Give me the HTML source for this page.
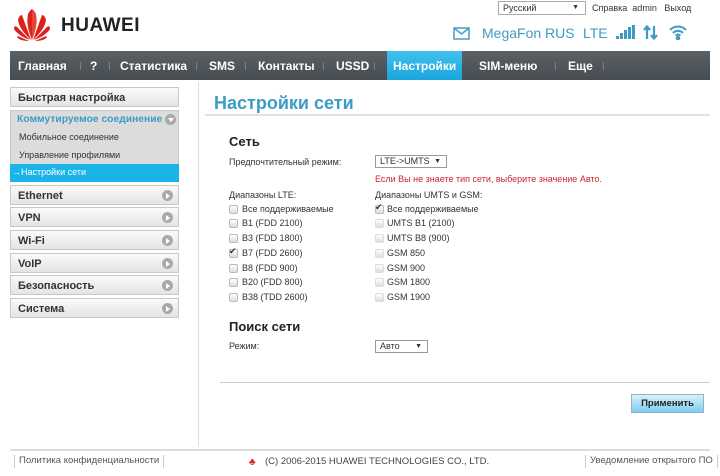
<!DOCTYPE html>
<html><head><meta charset="utf-8"><style>
*{margin:0;padding:0;box-sizing:border-box}
body{width:720px;height:476px;background:#fff;font-family:"Liberation Sans",Arial,sans-serif;position:relative;overflow:hidden;color:#333}
.a{position:absolute;white-space:nowrap}
.nav{position:absolute;left:10px;top:51px;width:700px;height:29px;background:linear-gradient(#5a6166,#464c50);}
.nav span{position:absolute;top:8px;color:#fff;font-weight:bold;font-size:12px}
.nav i{position:absolute;top:11px;width:1px;height:8px;background:#7a8085}
.act{position:absolute;left:377px;top:0;width:75px;height:29px;background:linear-gradient(#3fc2ee,#1aa5dc)}
.sb{position:absolute;left:10px;width:169px;height:20px;border:1px solid #c8c8c8;background:linear-gradient(#fafafa,#e4e4e4);font-weight:bold;font-size:11px;padding:4px 0 0 7px;color:#333}
.sb b{position:absolute;right:5px;top:4px;width:11px;height:11px;border-radius:50%;background:#a9a9a9}
.sb b:after{content:"";position:absolute;left:4px;top:2.5px;border-left:4px solid #fff;border-top:3px solid transparent;border-bottom:3px solid transparent}
.f{font-size:9px;color:#333}
.cb{position:absolute;width:9px;height:9px;border:1px solid #bbb;background:linear-gradient(#fff,#ddd);border-radius:2px}
.sel{position:absolute;height:13px;border:1px solid #999;background:#fff;font-size:9px;padding:0 0 0 4px;line-height:11px}
.sel:after{content:"▼";position:absolute;right:5px;top:0;font-size:7px}
</style></head><body>
<svg class="a" style="left:12px;top:6px" width="40" height="36" viewBox="0 0 40 36">
<g fill="#d9231d">
<path d="M20 34 C17 26 14 18 16 8 C18 4 20 3 20 3 Z"/>
<path d="M20 34 C23 26 26 18 24 8 C22 4 20 3 20 3 Z" fill="#e8453a"/>
<path d="M19 34 C13 28 7 22 6 14 C7 10 9 9 10 9 Z"/>
<path d="M21 34 C27 28 33 22 34 14 C33 10 31 9 30 9 Z"/>
<path d="M18 34 C12 32 5 28 2 23 C2 21 3 20 4 20 Z"/>
<path d="M22 34 C28 32 35 28 38 23 C38 21 37 20 36 20 Z"/>
<path d="M17 35 C12 35 7 34 5 31 L6 30 Z"/>
<path d="M23 35 C28 35 33 34 35 31 L34 30 Z"/>
</g></svg>
<div class="a" style="left:61px;top:15px;font-size:19px;font-weight:bold;color:#222;letter-spacing:0.5px">HUAWEI</div>
<div class="a" style="left:498px;top:1px;width:88px;height:14px;border:1px solid #aaa;font-size:9px;padding-left:4px;line-height:12px">Русский<span style="position:absolute;right:6px;font-size:7px">▼</span></div>
<div class="a f" style="left:592px;top:3px">Справка&nbsp; admin&nbsp;&nbsp; Выход</div>
<svg class="a" style="left:453px;top:27px" width="17" height="13"><rect x="1" y="1" width="15" height="11" fill="none" stroke="#4a9cc2" stroke-width="1.5"/><path d="M1 1 L8.5 7 L16 1" fill="none" stroke="#4a9cc2" stroke-width="1.5"/></svg>
<div class="a" style="left:482px;top:25px;font-size:14px;color:#3f9bc4">MegaFon RUS</div>
<div class="a" style="left:583px;top:25px;font-size:14px;color:#3f9bc4">LTE</div>
<svg class="a" style="left:616px;top:25px" width="20" height="15" fill="#3f9bc4"><rect x="0" y="11" width="3" height="3"/><rect x="4" y="8" width="3" height="6"/><rect x="8" y="5" width="3" height="9"/><rect x="12" y="2" width="3" height="12"/><rect x="16" y="0" width="3" height="14"/></svg>
<svg class="a" style="left:643px;top:25px" width="16" height="15" stroke="#3f9bc4" stroke-width="2.2" fill="none"><path d="M4 14V2M1 5L4 1.5L7 5M11 1V13M8 10L11 13.5L14 10"/></svg>
<svg class="a" style="left:669px;top:24px" width="18" height="16" fill="none" stroke="#3f9bc4" stroke-width="2"><path d="M1 6A11 11 0 0 1 17 6M4 9A7 7 0 0 1 14 9M6.5 11.5A3.5 3.5 0 0 1 11.5 11.5"/><circle cx="9" cy="14" r="1.3" fill="#3f9bc4"/></svg>
<div class="nav">
<div class="act"></div>
<span style="left:8px">Главная</span><i style="left:70px"></i>
<span style="left:80px">?</span><i style="left:99px"></i>
<span style="left:110px">Статистика</span><i style="left:186px"></i>
<span style="left:199px">SMS</span><i style="left:235px"></i>
<span style="left:248px">Контакты</span><i style="left:313px"></i>
<span style="left:326px">USSD</span><i style="left:364px"></i>
<span style="left:383px">Настройки</span>
<span style="left:469px">SIM-меню</span><i style="left:545px"></i>
<span style="left:558px">Еще</span><i style="left:593px"></i>
</div>
<div class="sb" style="top:87px">Быстрая настройка</div>
<div style="position:absolute;left:10px;top:110px;width:169px;height:72px;background:#dcdcdc;border:1px solid #c8c8c8"></div>
<div class="a" style="left:17px;top:114px;font-size:10.3px;font-weight:bold;color:#3d9cc6">Коммутируемое соединение</div>
<div class="a" style="left:165px;top:114px;width:11px;height:11px;border-radius:50%;background:#a9a9a9"><div style="position:absolute;left:2.5px;top:4px;border-top:4px solid #fff;border-left:3px solid transparent;border-right:3px solid transparent"></div></div>
<div class="a f" style="left:19px;top:132px">Мобильное соединение</div>
<div class="a f" style="left:19px;top:150px">Управление профилями</div>
<div style="position:absolute;left:10px;top:164px;width:169px;height:18px;background:#1bb4e8"></div>
<div class="a" style="left:12px;top:167px;font-size:9px;color:#fff">→Настройки сети</div>
<div class="sb" style="top:185px">Ethernet<b></b></div>
<div class="sb" style="top:207px">VPN<b></b></div>
<div class="sb" style="top:230px">Wi-Fi<b></b></div>
<div class="sb" style="top:253px">VoIP<b></b></div>
<div class="sb" style="top:275px">Безопасность<b></b></div>
<div class="sb" style="top:298px">Система<b></b></div>
<div style="position:absolute;left:198px;top:82px;width:1px;height:365px;background:#ddd"></div>
<div class="a" style="left:214px;top:93px;font-size:18px;font-weight:bold;color:#3d9cc6">Настройки сети</div>
<div style="position:absolute;left:205px;top:114px;width:505px;height:2px;background:#e2e2e2"></div>
<div class="a" style="left:229px;top:134px;font-size:13px;font-weight:bold;color:#222">Сеть</div>
<div class="a f" style="left:229px;top:157px">Предпочтительный режим:</div>
<div class="sel" style="left:375px;top:155px;width:72px">LTE-&gt;UMTS</div>
<div class="a" style="left:375px;top:174px;font-size:9px;color:#c8262c">Если Вы не знаете тип сети, выберите значение Авто.</div>
<div class="a f" style="left:229px;top:190px">Диапазоны LTE:</div>
<div class="a f" style="left:375px;top:190px">Диапазоны UMTS и GSM:</div>
<div class="cb" style="left:229px;top:205px"></div><div class="a f" style="left:242px;top:204px">Все поддерживаемые</div>
<div class="cb" style="left:229px;top:219px"></div><div class="a f" style="left:242px;top:218px">B1 (FDD 2100)</div>
<div class="cb" style="left:229px;top:234px"></div><div class="a f" style="left:242px;top:233px">B3 (FDD 1800)</div>
<div class="cb" style="left:229px;top:249px"></div><div class="a" style="left:229px;top:246px;font-size:9px">✔</div><div class="a f" style="left:242px;top:248px">B7 (FDD 2600)</div>
<div class="cb" style="left:229px;top:264px"></div><div class="a f" style="left:242px;top:263px">B8 (FDD 900)</div>
<div class="cb" style="left:229px;top:278px"></div><div class="a f" style="left:242px;top:277px">B20 (FDD 800)</div>
<div class="cb" style="left:229px;top:293px"></div><div class="a f" style="left:242px;top:292px">B38 (TDD 2600)</div>
<div class="cb" style="left:375px;top:205px"></div><div class="a" style="left:375px;top:202px;font-size:9px">✔</div><div class="a f" style="left:387px;top:204px">Все поддерживаемые</div>
<div class="cb" style="left:375px;top:219px;border-color:#ddd"></div><div class="a f" style="left:387px;top:218px">UMTS B1 (2100)</div>
<div class="cb" style="left:375px;top:234px;border-color:#ddd"></div><div class="a f" style="left:387px;top:233px">UMTS B8 (900)</div>
<div class="cb" style="left:375px;top:249px;border-color:#ddd"></div><div class="a f" style="left:387px;top:248px">GSM 850</div>
<div class="cb" style="left:375px;top:264px;border-color:#ddd"></div><div class="a f" style="left:387px;top:263px">GSM 900</div>
<div class="cb" style="left:375px;top:278px;border-color:#ddd"></div><div class="a f" style="left:387px;top:277px">GSM 1800</div>
<div class="cb" style="left:375px;top:293px;border-color:#ddd"></div><div class="a f" style="left:387px;top:292px">GSM 1900</div>
<div class="a" style="left:229px;top:319px;font-size:13px;font-weight:bold;color:#222">Поиск сети</div>
<div class="a f" style="left:229px;top:341px">Режим:</div>
<div class="sel" style="left:375px;top:340px;width:53px">Авто</div>
<div style="position:absolute;left:220px;top:382px;width:490px;height:1px;background:#ccc"></div>
<div class="a" style="left:631px;top:394px;width:73px;height:19px;border:1px solid #8fb6c8;background:linear-gradient(#d8f0fb,#7fcdee);font-size:9.5px;font-weight:bold;text-align:center;line-height:17px;color:#222">Применить</div>
<div style="position:absolute;left:10px;top:449px;width:700px;height:2px;background:#ddd"></div>
<div class="a" style="left:14px;top:455px;height:13px;border-left:1px solid #ccc;border-right:1px solid #ccc;padding:0 4px;font-size:9.5px;color:#555">Политика конфиденциальности</div>
<div class="a" style="left:249px;top:457px;color:#d9231d;font-size:10px">♣</div>
<div class="a" style="left:265px;top:456px;font-size:9.5px;color:#444">(C) 2006-2015 HUAWEI TECHNOLOGIES CO., LTD.</div>
<div class="a" style="left:585px;top:455px;height:13px;border-left:1px solid #ccc;border-right:1px solid #ccc;padding:0 4px;font-size:9.5px;color:#555">Уведомление открытого ПО</div>
</body></html>
